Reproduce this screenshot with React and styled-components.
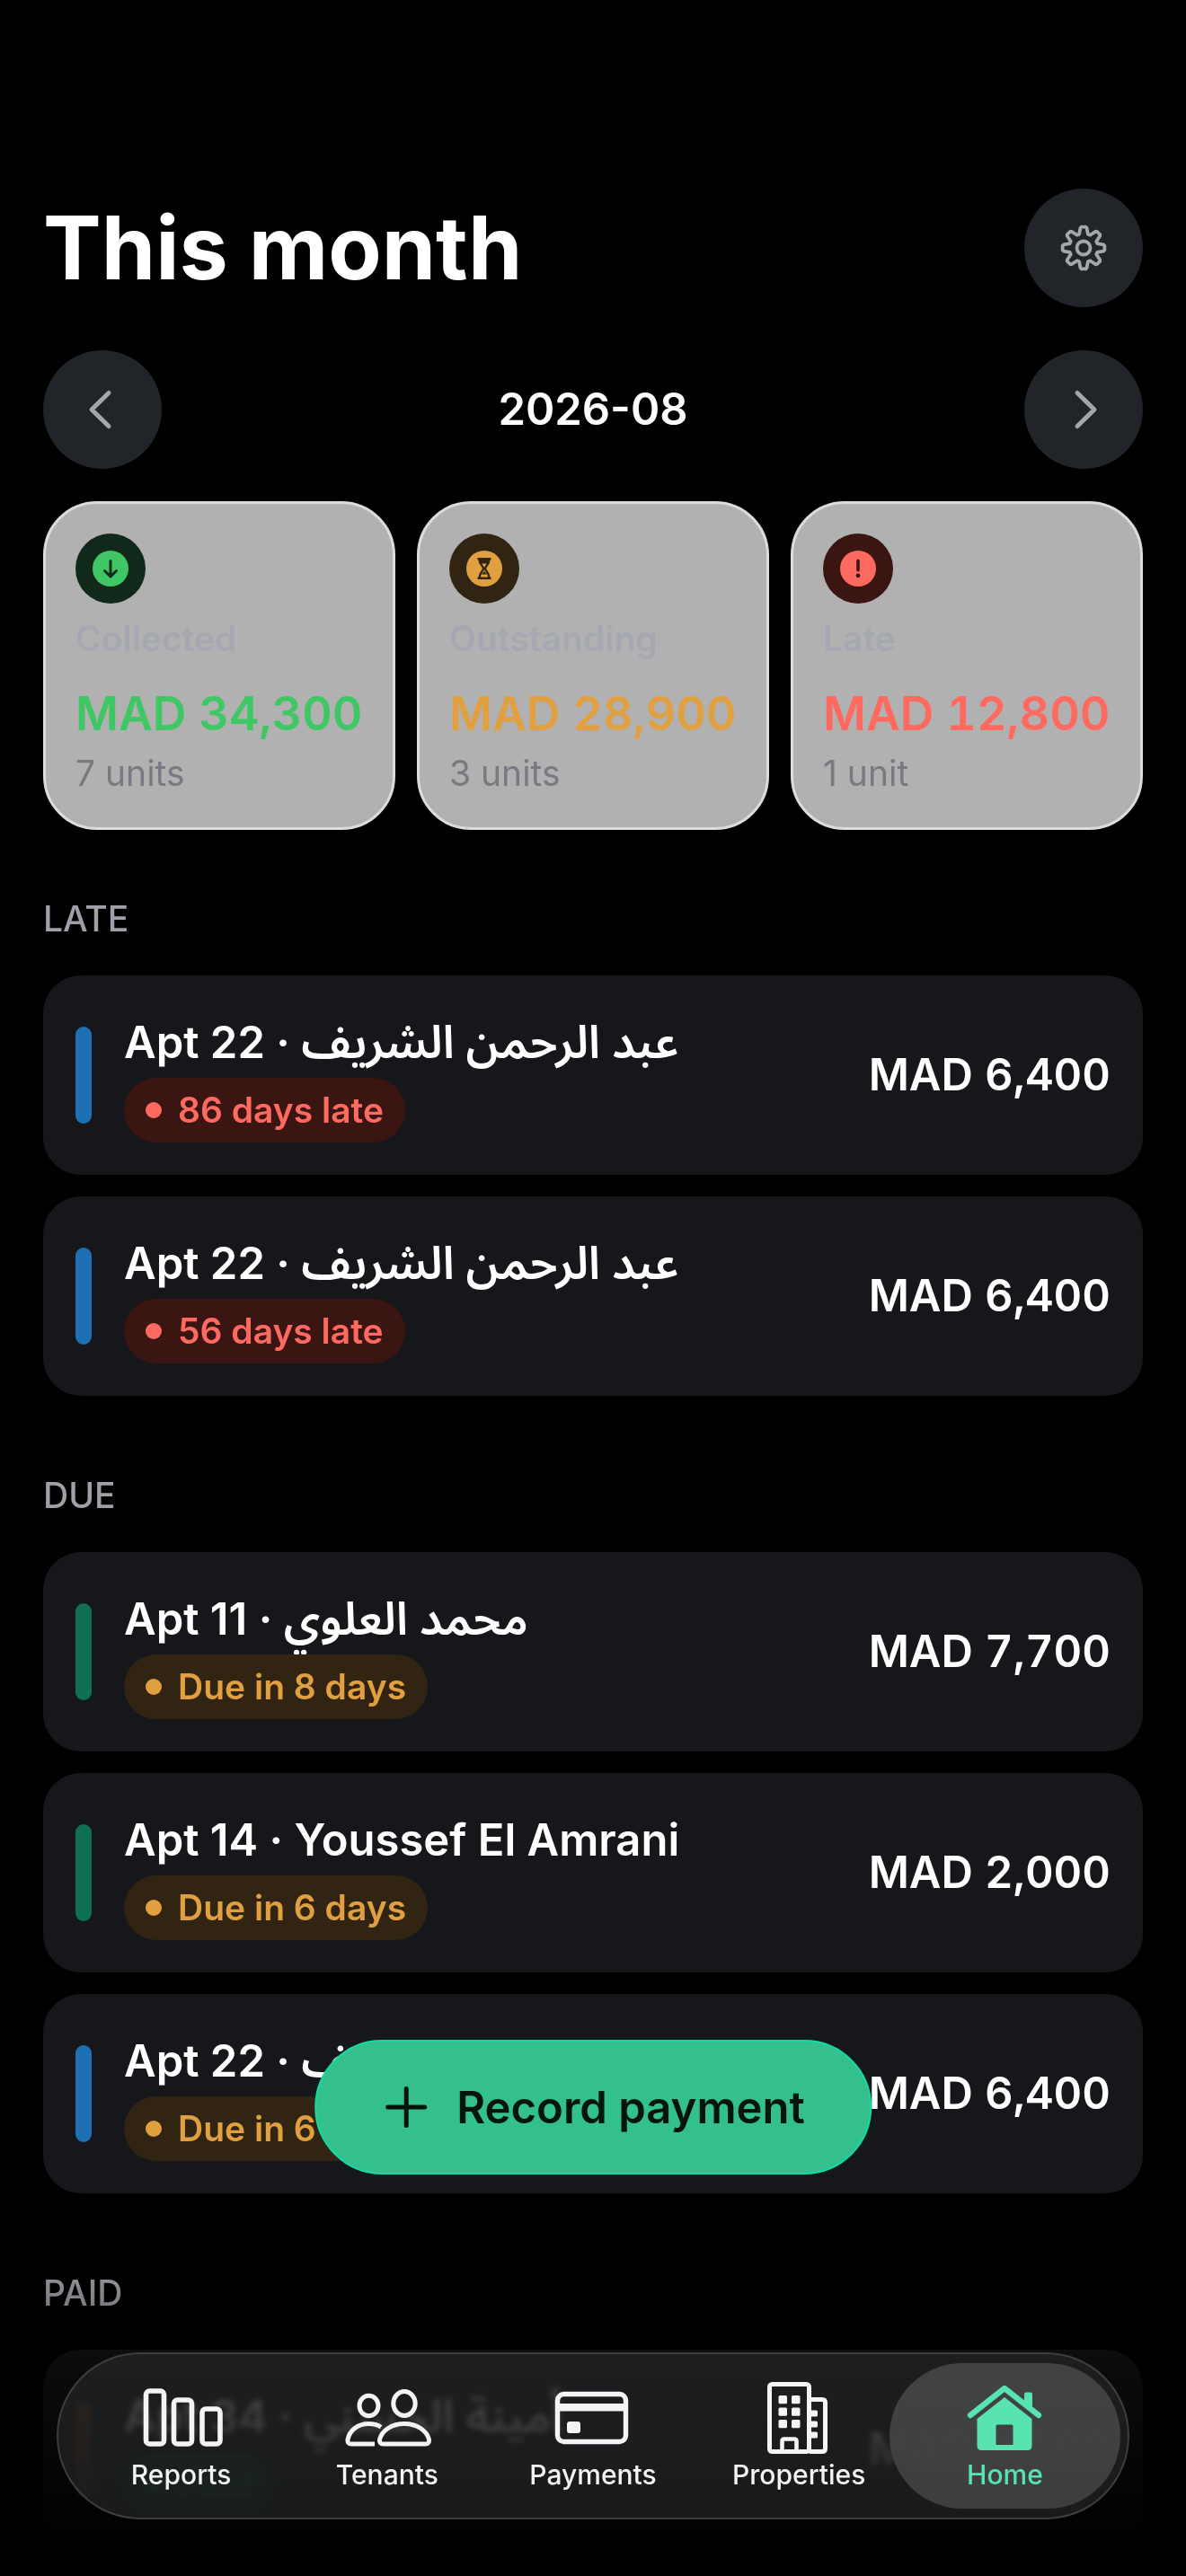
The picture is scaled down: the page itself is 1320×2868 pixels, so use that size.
import React from 'react'
import styled, { createGlobalStyle } from 'styled-components'

const stats = [
    { id: 'collected', label: 'Collected', amount: 'MAD 34,300', units: '7 units', color: '#40c765', tint: '#11291a' },
    { id: 'outstanding', label: 'Outstanding', amount: 'MAD 28,900', units: '3 units', color: '#e0a040', tint: '#312413' },
    { id: 'late', label: 'Late', amount: 'MAD 12,800', units: '1 unit', color: '#ff6a60', tint: '#3a1512' },
]

const tones = {
    late: { color: '#ff6a60', tint: '#3a1512' },
    due: { color: '#e0a040', tint: '#312413' },
    paid: { color: '#1f9a45', tint: '#0d4a20' },
}

const BLUE = '#1f6fb5'
const GREEN = '#0e6f52'
const BROWN = '#5e3218'

const sections = [
    {
        title: 'LATE',
        rows: [
            { id: 1, apt: 'Apt 22', tenant: 'عبد الرحمن الشريف', lang: 'ar', status: '86 days late', tone: 'late', bar: BLUE, amount: 'MAD 6,400' },
            { id: 2, apt: 'Apt 22', tenant: 'عبد الرحمن الشريف', lang: 'ar', status: '56 days late', tone: 'late', bar: BLUE, amount: 'MAD 6,400' },
        ],
    },
    {
        title: 'DUE',
        rows: [
            { id: 3, apt: 'Apt 11', tenant: 'محمد العلوي', lang: 'ar', status: 'Due in 8 days', tone: 'due', bar: GREEN, amount: 'MAD 7,700' },
            { id: 4, apt: 'Apt 14', tenant: 'Youssef El Amrani', status: 'Due in 6 days', tone: 'due', bar: GREEN, amount: 'MAD 2,000' },
            { id: 5, apt: 'Apt 22', tenant: 'عبد الرحمن الشريف', lang: 'ar', status: 'Due in 6 days', tone: 'due', bar: BLUE, amount: 'MAD 6,400' },
        ],
    },
    {
        title: 'PAID',
        rows: [
            { id: 6, apt: 'Apt 34', tenant: 'أمينة الحسني', lang: 'ar', status: 'Paid', tone: 'paid', bar: BROWN, amount: 'MAD 8,500' },
        ],
    },
]

// eight teeth around a centre at 0,0
const gearPoints = Array.from({ length: 8 }, (_, i) => i * 45)
    .flatMap((a) => [[16, a - 18], [22.5, a - 9], [23.5, a - 6], [23.5, a + 6], [22.5, a + 9], [16, a + 18]])
    .map(([r, deg]) => {
        const t = (deg * Math.PI) / 180
        return `${(r * Math.sin(t)).toFixed(2)},${(-r * Math.cos(t)).toFixed(2)}`
    })
    .join(' ')

const GearIcon = () => (
    <svg width="56" height="56" viewBox="-28 -28 56 56" fill="none" stroke="currentColor" strokeWidth="3.8" strokeLinejoin="round">
        <polygon points={gearPoints} />
        <circle r="7.5" />
    </svg>
)

const ChevronIcon = ({ next }) => (
    <svg width="56" height="56" viewBox="-28 -28 56 56" fill="none" stroke="currentColor" strokeWidth="5" strokeLinecap="round" strokeLinejoin="round">
        <path d={next ? 'M-7 -18.5 L12 0 L-7 18.5' : 'M7 -18.5 L-12 0 L7 18.5'} />
    </svg>
)

const PlusIcon = () => (
    <svg width="48" height="48" viewBox="0 0 48 48" fill="none" stroke="currentColor" strokeWidth="5" strokeLinecap="round">
        <path d="M24 3.5 V44.5 M3.5 24 H44.5" />
    </svg>
)

const StatGlyph = ({ id, color, tint }) => (
    <svg width="78" height="78" viewBox="0 0 78 78" aria-hidden="true">
        <circle cx="39" cy="39" r="39" fill={tint} />
        <circle cx="39" cy="39" r="20" fill={color} />
        {id === 'collected' && (
            <path d="M39 30.5 V47 M32.5 41.5 L39 48 L45.5 41.5" fill="none" stroke={tint} strokeWidth="3" strokeLinecap="round" strokeLinejoin="round" />
        )}
        {id === 'outstanding' && (
            <g fill="none" stroke={tint} strokeWidth="2.4" strokeLinecap="round" strokeLinejoin="round">
                <path d="M32.5 28.2 H45.5 M32.5 49.8 H45.5" />
                <path d="M33.5 28.5 C33.5 35 38 36 38 39 C38 42 33.5 43 33.5 49.5" />
                <path d="M44.5 28.5 C44.5 35 40 36 40 39 C40 42 44.5 43 44.5 49.5" />
                <path d="M34 28.5 H44 L43 33.5 H35 Z M39 42 L36 45.5 H42 Z" fill={tint} stroke="none" />
            </g>
        )}
        {id === 'late' && (
            <g fill={tint}>
                <rect x="37.2" y="28.6" width="3.6" height="14" rx="1.8" />
                <circle cx="39" cy="46.8" r="2.4" />
            </g>
        )}
    </svg>
)

const ReportsIcon = () => (
    <g fill="none" stroke="currentColor" strokeWidth="5.6">
        <rect x="10.5" y="11" width="20" height="59" rx="4" />
        <rect x="41.5" y="21" width="20" height="49" rx="4" />
        <rect x="73" y="31" width="20" height="39" rx="4" />
    </g>
)

const TenantsIcon = () => (
    <g fill="none" stroke="currentColor" strokeWidth="5" strokeLinejoin="round">
        <ellipse cx="29.5" cy="27.5" rx="10.5" ry="11.2" />
        <ellipse cx="69" cy="25" rx="12.2" ry="13.5" />
        <path d="M43 51.2 C39 48.5 34 47.5 29.5 47.5 C17 47.5 8 55 6 65 Q5.5 70 10 70 H36" />
        <path d="M45.5 70 H92.5 Q97 70 96.5 65 C94 55 83 47.5 69 47.5 C55 47.5 44 55 41.5 65 Q41 70 45.5 70 Z" />
    </g>
)

const PaymentsIcon = () => (
    <g fill="currentColor">
        <rect x="10.5" y="14.5" width="76" height="53" rx="7" fill="none" stroke="currentColor" strokeWidth="5.4" />
        <rect x="11" y="25" width="75" height="8.5" />
        <rect x="21" y="45" width="15" height="13" rx="3" />
    </g>
)

const PropertiesIcon = () => (
    <g fill="currentColor">
        <g fill="none" stroke="currentColor" strokeWidth="5">
            <rect x="17.5" y="3.5" width="44" height="75" rx="3" />
            <path d="M62 20.5 H76 Q79.5 20.5 79.5 24 V75 Q79.5 78.5 76 78.5 H62" />
            <path d="M31.5 78 V67 Q31.5 64.5 34 64.5 H45 Q47.5 64.5 47.5 67 V78" strokeWidth="4.6" />
        </g>
        {[16, 29.5, 43].map((y) => (
            <React.Fragment key={y}>
                <rect x="27.5" y={y} width="9.5" height="9.2" rx="1.5" />
                <rect x="42" y={y} width="9.5" height="9.2" rx="1.5" />
            </React.Fragment>
        ))}
        {[32.5, 44.5, 56.5].map((y) => (
            <rect key={y} x="62" y={y} width="9" height="7" rx="1.5" />
        ))}
    </g>
)

const HomeIcon = () => (
    <g fill="currentColor">
        <path d="M12 38 L50 8 L88 38" fill="none" stroke="currentColor" strokeWidth="6.4" strokeLinecap="round" strokeLinejoin="round" />
        <path d="M72 14.5 Q72 12.5 74 12.5 H79 Q81 12.5 81 14.5 V34 L72 27 Z" />
        <path
            fillRule="evenodd"
            d="M50 18 L80.5 42 V72 Q80.5 77 75.5 77 H24.5 Q19.5 77 19.5 72 V42 Z M42 48.5 Q40.5 48.5 40.5 50 V71 H59.5 V50 Q59.5 48.5 58 48.5 Z"
        />
    </g>
)

const tabs = [
    { label: 'Reports', icon: <ReportsIcon /> },
    { label: 'Tenants', icon: <TenantsIcon /> },
    { label: 'Payments', icon: <PaymentsIcon /> },
    { label: 'Properties', icon: <PropertiesIcon /> },
    { label: 'Home', icon: <HomeIcon />, active: true },
]

const PaymentRow = ({ row }) => (
    <Row>
        <PropertyBar $color={row.bar} />
        <RowBody>
            <RowTitle>
                {row.apt} · <Tenant lang={row.lang}>{row.tenant}</Tenant>
            </RowTitle>
            <Status $tone={tones[row.tone]}>{row.status}</Status>
        </RowBody>
        <Amount>{row.amount}</Amount>
    </Row>
)

const App = () => {
    return (
        <>
            <GlobalStyle />
            <Page>
                <Header>
                    <Title>This month</Title>
                    <RoundButton aria-label="Settings">
                        <GearIcon />
                    </RoundButton>
                </Header>
                <MonthNav>
                    <RoundButton aria-label="Previous month">
                        <ChevronIcon />
                    </RoundButton>
                    <Month>2026-08</Month>
                    <RoundButton aria-label="Next month">
                        <ChevronIcon next />
                    </RoundButton>
                </MonthNav>
                <Stats>
                    {stats.map((stat) => (
                        <StatCard key={stat.id}>
                            <StatGlyph id={stat.id} color={stat.color} tint={stat.tint} />
                            <StatLabel>{stat.label}</StatLabel>
                            <StatAmount $color={stat.color}>{stat.amount}</StatAmount>
                            <StatUnits>{stat.units}</StatUnits>
                        </StatCard>
                    ))}
                </Stats>
                {sections.map((section) => (
                    <Section key={section.title}>
                        <SectionTitle>{section.title}</SectionTitle>
                        <Rows>
                            {section.rows.map((row) => (
                                <PaymentRow key={row.id} row={row} />
                            ))}
                        </Rows>
                    </Section>
                ))}
            </Page>
            <BottomFade />
            <RecordButton>
                <PlusIcon />
                Record payment
            </RecordButton>
            <TabBar>
                {tabs.map((tab) => (
                    <Tab key={tab.label} href="#" $active={tab.active} aria-current={tab.active ? 'page' : undefined}>
                        <svg width="100" height="84" viewBox="0 0 100 84" aria-hidden="true">
                            {tab.icon}
                        </svg>
                        <span>{tab.label}</span>
                    </Tab>
                ))}
            </TabBar>
        </>
    )
}

export default App


const GlobalStyle = createGlobalStyle`
    * {
        box-sizing: border-box;
    }
    body {
        margin: 0;
        background: #000;
        color: #fff;
        font-family: Inter, "Noto Sans Arabic", "DejaVu Sans", sans-serif;
    }
    button {
        font: inherit;
        border: 0;
        padding: 0;
        cursor: pointer;
    }
    svg {
        display: block;
        flex-shrink: 0;
    }
`
const Page = styled.main`
    min-height: 100vh;
    padding: 210px 48px 30px;
`
const Header = styled.header`
    display: flex;
    align-items: center;
    justify-content: space-between;
`
const Title = styled.h1`
    margin: 0;
    font-size: 97px;
    line-height: 120px;
    font-weight: 700;
`
const RoundButton = styled.button`
    display: flex;
    align-items: center;
    justify-content: center;
    width: 132px;
    height: 132px;
    border-radius: 50%;
    background: #212428;
    color: #a3a6ab;
`
const MonthNav = styled.nav`
    display: flex;
    align-items: center;
    justify-content: space-between;
    margin-top: 48px;
`
const Month = styled.div`
    font-size: 49px;
    line-height: 66px;
    font-weight: 600;
`
const Stats = styled.section`
    display: grid;
    grid-template-columns: repeat(3, 1fr);
    gap: 24px;
    margin: 36px 0 72px;
`
const StatCard = styled.article`
    padding: 33px;
    border: 3px solid #dcdcdc;
    border-radius: 60px;
    background: #b1b1b1;
    white-space: nowrap;
`
const StatLabel = styled.div`
    margin-top: 12px;
    font-size: 39px;
    line-height: 54px;
    font-weight: 600;
    color: #a6a8b1;
`
const StatAmount = styled.div`
    margin-top: 24px;
    font-size: 52px;
    line-height: 66px;
    font-weight: 600;
    font-variant-numeric: tabular-nums;
    color: ${(p) => p.$color};
`
const StatUnits = styled.div`
    margin-top: 6px;
    font-size: 39px;
    line-height: 54px;
    color: #777a80;
`
const Section = styled.section`
    margin-bottom: 84px;

    &:last-child {
        margin-bottom: 0;
    }
`
const SectionTitle = styled.h2`
    margin: 0 0 36px;
    font-size: 39px;
    line-height: 54px;
    font-weight: 500;
    color: #a0a0a8;
`
const Rows = styled.ul`
    display: flex;
    flex-direction: column;
    gap: 24px;
    margin: 0;
    padding: 0;
    list-style: none;
`
const Row = styled.li`
    display: flex;
    align-items: center;
    gap: 36px;
    padding: 36px;
    border-radius: 42px;
    background: #16171a;
`
const PropertyBar = styled.div`
    width: 18px;
    height: 108px;
    border-radius: 9px;
    background: ${(p) => p.$color};
`
const RowBody = styled.div`
    display: flex;
    flex: 1;
    flex-direction: column;
    align-items: flex-start;
    min-width: 0;
`
const RowTitle = styled.div`
    font-size: 49px;
    line-height: 78px;
    font-weight: 600;
    white-space: nowrap;
`
const Tenant = styled.bdi`
    &:lang(ar) {
        font-size: 51px;
        line-height: 66px;
    }
`
const Status = styled.div`
    display: flex;
    align-items: center;
    gap: 18px;
    padding: 9px 24px;
    border-radius: 36px;
    font-size: 39px;
    line-height: 54px;
    font-weight: 600;
    color: ${(p) => p.$tone.color};
    background: ${(p) => p.$tone.tint};

    &::before {
        content: '';
        width: 18px;
        height: 18px;
        border-radius: 50%;
        background: currentColor;
    }
`
const Amount = styled.div`
    font-size: 49px;
    line-height: 66px;
    font-weight: 600;
    font-variant-numeric: tabular-nums;
`
const BottomFade = styled.div`
    position: fixed;
    inset: auto 0 0;
    height: 360px;
    background: linear-gradient(rgba(0, 0, 0, 0), rgba(0, 0, 0, 0.55) 40%, rgba(0, 0, 0, 0.94) 88%);
    pointer-events: none;
`
const RecordButton = styled.button`
    position: fixed;
    bottom: 447px;
    left: 50%;
    transform: translateX(-50%);
    display: flex;
    align-items: center;
    gap: 32px;
    height: 150px;
    && {
        padding: 0 72px 0 76px;
        border: 2px solid #12dba3;
    }
    border-radius: 75px;
    background: #34c08c;
    color: #03150d;
    font-size: 49px;
    font-weight: 600;
    white-space: nowrap;
`
const TabBar = styled.nav`
    position: fixed;
    inset: auto 63px 63px;
    display: flex;
    height: 186px;
    padding: 0 22px;
    border: 2px solid #3d3e40;
    border-radius: 93px;
    background: rgba(34, 35, 37, 0.74);
    backdrop-filter: blur(3px) brightness(1.5);
`
const Tab = styled.a`
    position: relative;
    display: flex;
    flex: 1;
    flex-direction: column;
    align-items: center;
    justify-content: center;
    gap: 2px;
    color: ${(p) => (p.$active ? '#58e3b0' : '#f4f4f6')};
    font-size: 30px;
    line-height: 36px;
    font-weight: 500;
    text-decoration: none;

    svg, span {
        position: relative;
    }

    &::before {
        content: '';
        position: absolute;
        inset: 10px -14px;
        border-radius: 81px;
        background: ${(p) => (p.$active ? 'linear-gradient(rgba(70, 71, 73, 0.9), rgba(66, 66, 67, 0.9))' : 'none')};
    }
`
